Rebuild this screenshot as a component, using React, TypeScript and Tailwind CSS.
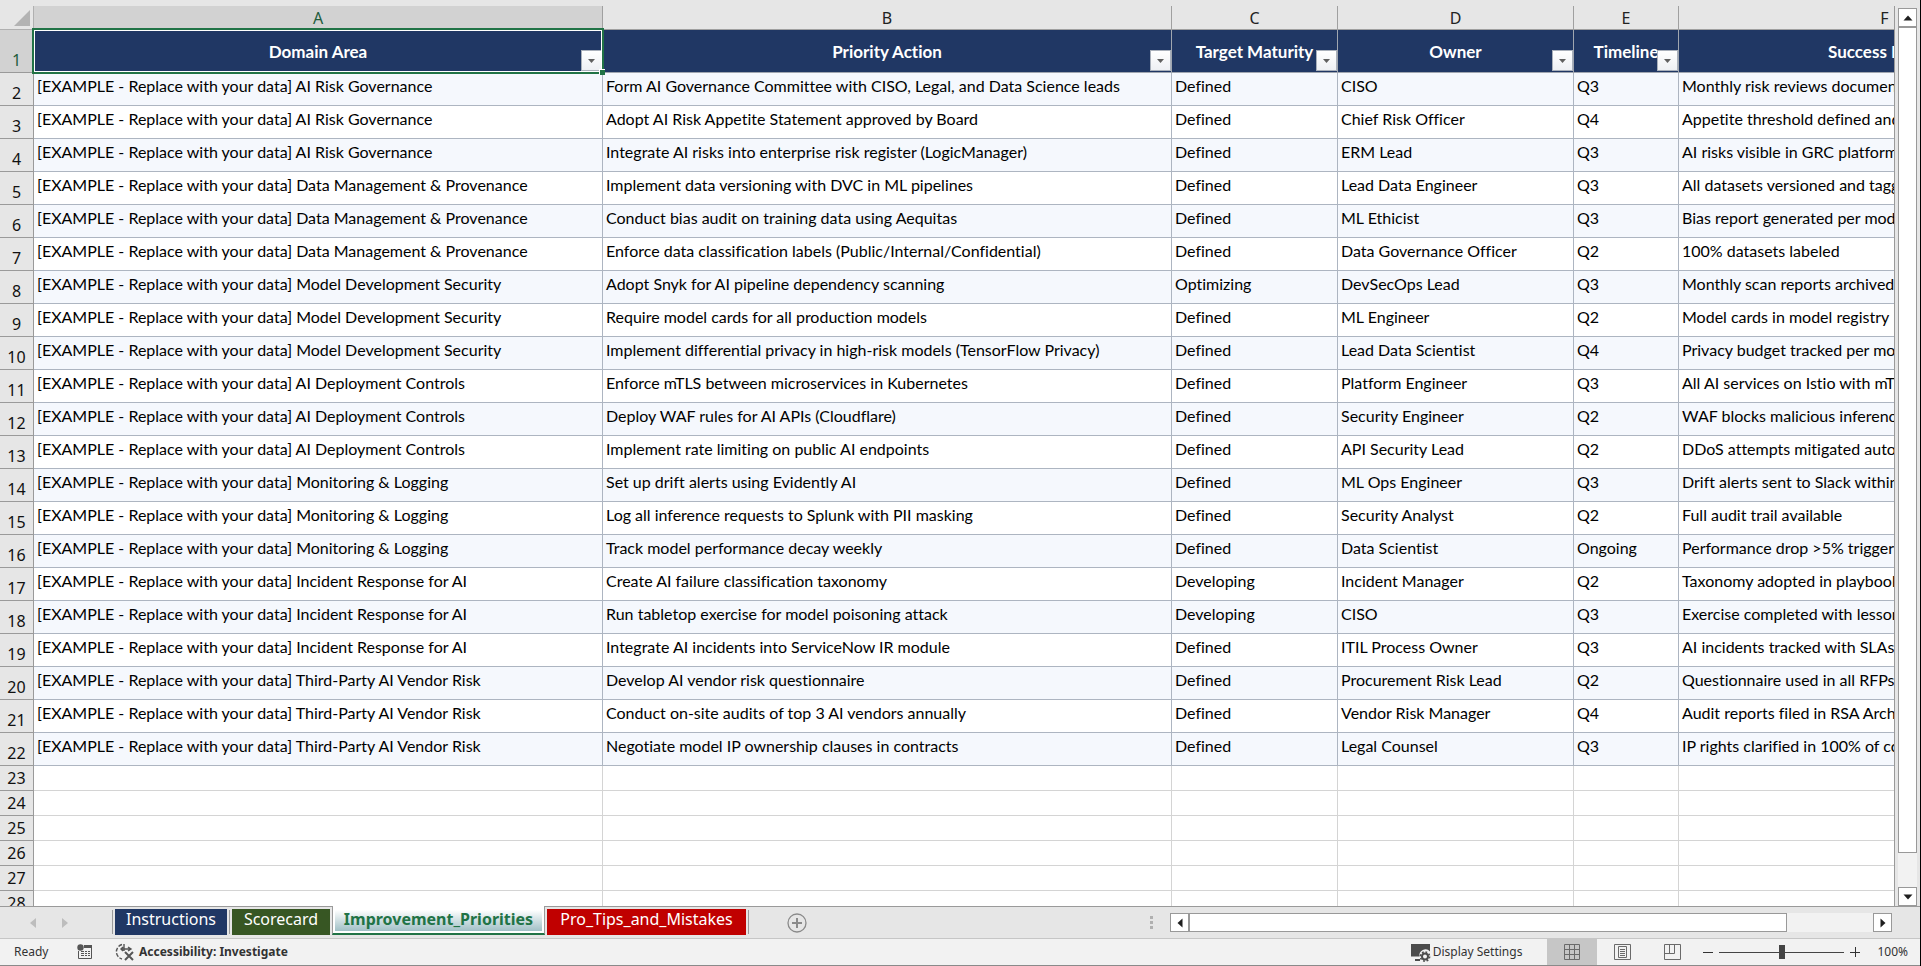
import type { ReactNode } from "react";

const columns = [
  { letter: "A", title: "Domain Area", active: true },
  { letter: "B", title: "Priority Action" },
  { letter: "C", title: "Target Maturity" },
  { letter: "D", title: "Owner" },
  { letter: "E", title: "Timeline" },
  { letter: "F", title: "Success Metric" },
];

const groups = [
  "AI Risk Governance",
  "Data Management & Provenance",
  "Model Development Security",
  "AI Deployment Controls",
  "Monitoring & Logging",
  "Incident Response for AI",
  "Third-Party AI Vendor Risk",
];

// Three actions per domain area, in order.
const actions = [
  ["Form AI Governance Committee with CISO, Legal, and Data Science leads", "Defined", "CISO", "Q3", "Monthly risk reviews documented"],
  ["Adopt AI Risk Appetite Statement approved by Board", "Defined", "Chief Risk Officer", "Q4", "Appetite threshold defined and signed"],
  ["Integrate AI risks into enterprise risk register (LogicManager)", "Defined", "ERM Lead", "Q3", "AI risks visible in GRC platform"],
  ["Implement data versioning with DVC in ML pipelines", "Defined", "Lead Data Engineer", "Q3", "All datasets versioned and tagged"],
  ["Conduct bias audit on training data using Aequitas", "Defined", "ML Ethicist", "Q3", "Bias report generated per model"],
  ["Enforce data classification labels (Public/Internal/Confidential)", "Defined", "Data Governance Officer", "Q2", "100% datasets labeled"],
  ["Adopt Snyk for AI pipeline dependency scanning", "Optimizing", "DevSecOps Lead", "Q3", "Monthly scan reports archived"],
  ["Require model cards for all production models", "Defined", "ML Engineer", "Q2", "Model cards in model registry"],
  ["Implement differential privacy in high-risk models (TensorFlow Privacy)", "Defined", "Lead Data Scientist", "Q4", "Privacy budget tracked per model"],
  ["Enforce mTLS between microservices in Kubernetes", "Defined", "Platform Engineer", "Q3", "All AI services on Istio with mTLS"],
  ["Deploy WAF rules for AI APIs (Cloudflare)", "Defined", "Security Engineer", "Q2", "WAF blocks malicious inference"],
  ["Implement rate limiting on public AI endpoints", "Defined", "API Security Lead", "Q2", "DDoS attempts mitigated automatically"],
  ["Set up drift alerts using Evidently AI", "Defined", "ML Ops Engineer", "Q3", "Drift alerts sent to Slack within 1 hour"],
  ["Log all inference requests to Splunk with PII masking", "Defined", "Security Analyst", "Q2", "Full audit trail available"],
  ["Track model performance decay weekly", "Defined", "Data Scientist", "Ongoing", "Performance drop >5% triggers review"],
  ["Create AI failure classification taxonomy", "Developing", "Incident Manager", "Q2", "Taxonomy adopted in playbooks"],
  ["Run tabletop exercise for model poisoning attack", "Developing", "CISO", "Q3", "Exercise completed with lessons"],
  ["Integrate AI incidents into ServiceNow IR module", "Defined", "ITIL Process Owner", "Q3", "AI incidents tracked with SLAs"],
  ["Develop AI vendor risk questionnaire", "Defined", "Procurement Risk Lead", "Q2", "Questionnaire used in all RFPs"],
  ["Conduct on-site audits of top 3 AI vendors annually", "Defined", "Vendor Risk Manager", "Q4", "Audit reports filed in RSA Archer"],
  ["Negotiate model IP ownership clauses in contracts", "Defined", "Legal Counsel", "Q3", "IP rights clarified in 100% of contracts"],
];

const rows = actions.map((action, i) => [
  `[EXAMPLE - Replace with your data] ${groups[Math.floor(i / 3)]}`,
  ...action,
]);

const emptyRows = [23, 24, 25, 26, 27, 28];

function FilterButton({ label }: { label: string }) {
  return (
    <button
      aria-label={`Filter ${label}`}
      className="absolute right-0 bottom-px flex h-[21px] w-[21px] items-center justify-center border border-[#a9b0bb] bg-linear-to-b from-white to-[#eef0f4]"
    >
      <svg width="7" height="4" viewBox="0 0 7 4" fill="#606060">
        <path d="M0 0h7L3.5 4z" />
      </svg>
    </button>
  );
}

function RowHeader({ n, active = false }: { n: number; active?: boolean }) {
  return (
    <th
      scope="row"
      className={`overflow-hidden border-r border-b border-[#9a9a9a] p-0 align-bottom font-['Noto_Sans',sans-serif] text-base leading-6 font-normal ${
        active ? "bg-[#d2d2d2] text-[#1e5c3c]" : "bg-[#e6e6e6] text-[#111]"
      }`}
    >
      {n}
    </th>
  );
}

function Sheet() {
  return (
    <div className="min-w-0 flex-1 overflow-hidden border-r border-[#9a9a9a]">
      <table className="w-[2091px] table-fixed border-separate border-spacing-0 bg-white font-[Lato,sans-serif] text-base text-black [font-variant-ligatures:none]">
        <colgroup>
          <col className="w-[34px]" />
          <col className="w-[569px]" />
          <col className="w-[569px]" />
          <col className="w-[166px]" />
          <col className="w-[236px]" />
          <col className="w-[105px]" />
          <col className="w-[412px]" />
        </colgroup>
        <thead>
          <tr className="h-6 font-['Noto_Sans',sans-serif]">
            <td className="border-r border-b border-[#b0b0b0] bg-[#e6e6e6] p-0">
              <svg className="mr-[3px] ml-auto" width="16" height="16" viewBox="0 0 16 16" fill="#b3b3b3">
                <path d="M16 0v16H0z" />
              </svg>
            </td>
            {columns.map((col) => (
              <th
                key={col.letter}
                className={`border-r border-b border-[#a0a0a0] p-0 leading-5 font-normal ${
                  col.active ? "bg-[#d2d2d2] text-[#1e5c3c]" : "bg-[#e6e6e6] text-[#222]"
                }`}
              >
                {col.letter}
              </th>
            ))}
          </tr>
          <tr className="h-[43px]">
            <RowHeader n={1} active />
            {columns.map((col) => (
              <th
                key={col.letter}
                scope="col"
                className="relative border-r border-b border-[#a0a6b0] bg-[#203764] px-0 pt-0.5 pb-0 text-[17px] leading-6 text-white"
              >
                {col.title}
                {col.active && (
                  <span className="pointer-events-none absolute -inset-0.5 z-10 border-2 border-[#217346]">
                    <span className="absolute inset-0 border border-white" />
                    <span className="absolute -right-[3px] -bottom-[3px] h-[6px] w-[6px] border-t border-l border-white bg-[#217346]" />
                  </span>
                )}
                <FilterButton label={col.title} />
              </th>
            ))}
          </tr>
        </thead>
        <tbody>
          {rows.map((row, i) => (
            <tr key={i} className="h-[33px] odd:bg-[#f5f8fd]">
              <RowHeader n={i + 2} />
              {row.map((cell, j) => (
                <td
                  key={j}
                  className="overflow-hidden border-r border-b border-[#adb5c1] px-[3px] pt-0 pb-1.5 align-middle leading-6 whitespace-nowrap"
                >
                  {cell}
                </td>
              ))}
            </tr>
          ))}
          {emptyRows.map((n) => (
            <tr key={n} className="h-[25px]">
              <RowHeader n={n} />
              {columns.map((col) => (
                <td key={col.letter} className="border-r border-b border-[#d4d4d4] p-0" />
              ))}
            </tr>
          ))}
        </tbody>
      </table>
    </div>
  );
}

type ArrowProps = { label: string; path: string };

function ScrollButton({ label, path }: ArrowProps) {
  return (
    <button
      aria-label={label}
      className="flex h-[19px] w-[19px] shrink-0 items-center justify-center border border-[#999] bg-white"
    >
      <svg width="10" height="10" viewBox="0 0 10 10" fill="#1f1f1f">
        <path d={path} />
      </svg>
    </button>
  );
}

function VerticalScroll() {
  return (
    <div className="mx-[3px] mt-0.5 flex w-[19px] shrink-0 flex-col bg-[#f2f2f2]">
      <ScrollButton label="Scroll up" path="M5 2.5l4.5 5h-9z" />
      <div className="mb-[34px] flex-1 border border-[#999] bg-white" />
      <ScrollButton label="Scroll down" path="M5 7.5L.5 2.5h9z" />
    </div>
  );
}

function Tab({ className, children }: { className: string; children: ReactNode }) {
  return (
    <button className={`flex h-[26px] items-center justify-center pb-1.5 text-base leading-5 text-white ${className}`}>
      {children}
    </button>
  );
}

function TabBar() {
  return (
    <div className="flex h-8 shrink-0 items-start border-t border-[#9a9a9a] bg-[#e6e6e6] font-['Noto_Sans',sans-serif]">
      <div className="flex h-8 w-28 shrink-0 items-center gap-[26px] pl-[30px]">
        <button aria-label="Previous sheet">
          <svg width="6" height="10" viewBox="0 0 6 10" fill="#bdbdbd">
            <path d="M6 0v10L0 5z" />
          </svg>
        </button>
        <button aria-label="Next sheet">
          <svg width="6" height="10" viewBox="0 0 6 10" fill="#bdbdbd">
            <path d="M0 0v10l6-5z" />
          </svg>
        </button>
      </div>
      <div className="mt-[3px] h-6 w-px bg-[#9a9a9a]" />
      <Tab className="mt-0.5 ml-0.5 w-28 bg-[#203764]">Instructions</Tab>
      <div className="mt-[3px] ml-0.5 h-6 w-px bg-[#9a9a9a]" />
      <Tab className="mt-0.5 ml-0.5 w-[98px] bg-[#375623]">Scorecard</Tab>
      <div className="-mt-px ml-0.5 h-[29px] w-[213px] shrink-0 border-x border-b-2 border-x-[#9a9a9a] border-b-[#217346] bg-white p-0.5 pt-1">
        <button className="flex h-full w-full items-center justify-center bg-linear-to-b from-white to-[#a0c0c6] pb-1 text-base leading-5 font-bold text-[#217346]">
          Improvement_Priorities
        </button>
      </div>
      <Tab className="mt-0.5 ml-0.5 w-[199px] bg-[#c00000]">Pro_Tips_and_Mistakes</Tab>
      <div className="mt-[3px] ml-0.5 h-6 w-px bg-[#9a9a9a]" />
      <button aria-label="New sheet" className="mt-1.5 ml-[38px]">
        <svg width="20" height="20" viewBox="0 0 20 20" fill="none" stroke="#8a8a8a">
          <circle cx="10" cy="10" r="9" strokeWidth="1.3" />
          <path d="M10 5v10M5 10h10" strokeWidth="2" />
        </svg>
      </button>
      <div className="mt-[9px] mr-[17px] ml-auto flex flex-col gap-0.5">
        <span className="h-[3px] w-[3px] bg-[#b0b0b0]" />
        <span className="h-[3px] w-[3px] bg-[#b0b0b0]" />
        <span className="h-[3px] w-[3px] bg-[#b0b0b0]" />
      </div>
      <div className="mt-1.5 mr-7 flex w-[722px] shrink-0 bg-[#f2f2f2]">
        <ScrollButton label="Scroll left" path="M2.5 5l5-4.500v9z" />
        <div className="mr-[86px] flex-1 border border-[#999] bg-white" />
        <ScrollButton label="Scroll right" path="M7.5 5l-5-4.500v9z" />
      </div>
    </div>
  );
}

function StatusBar() {
  return (
    <footer className="flex h-7 shrink-0 items-center border-t border-b border-t-[#c6c6c6] border-b-[#8a8a8a] bg-[#f2f2f2] pl-3.5 font-['Noto_Sans',sans-serif] text-xs text-[#333]">
      <span className="w-[63px]">Ready</span>
      <button aria-label="Macro recording">
        <svg width="16" height="16" viewBox="0 0 16 16" fill="none" stroke="#555">
          <path d="M1.5 7v7.5h13V1" />
          <path d="M7 2.500h8" strokeWidth="3" />
          <path d="M4 7.500h3M8 7.500h2M11 7.500h2M4 9.500h3M8 9.500h2M11 9.500h2M4 11.500h3M8 11.500h2M11 11.500h2" />
          <circle cx="3.500" cy="3.500" r="3.200" fill="#555" stroke="none" />
        </svg>
      </button>
      <button className="ml-[22px] flex items-center gap-1 font-bold">
        <svg width="20" height="18" viewBox="0 0 20 18" fill="none" stroke="#555" strokeWidth="1.4">
          <path d="M7 1.500A7.500 7.500 0 0 0 7 16" strokeDasharray="4 1.500" />
          <path d="M6 6h10M8 4L6 6l2 2M13 4l3 2-3 2M9 1v7" />
          <path d="M10 9l8 8M18 9l-8 8" strokeWidth="2" />
        </svg>
        Accessibility: Investigate
      </button>
      <button className="ml-auto flex items-center gap-0.5">
        <svg width="20" height="19" viewBox="0 0 20 19" fill="none" stroke="#4c4c4c">
          <path d="M0 1h19v7.500A6 6 0 0 0 8.500 13.500H0z" fill="#4c4c4c" stroke="none" />
          <circle cx="14" cy="13.500" r="3" strokeWidth="2" />
          <circle cx="14" cy="13.500" r="4.600" strokeWidth="1.6" strokeDasharray="1.8 1.8" />
          <path d="M4 17h5" strokeWidth="2" />
        </svg>
        Display Settings
      </button>
      <div className="ml-[25px] flex h-full">
        <button aria-label="Normal view" className="flex w-[50px] items-center justify-center bg-[#c6c6c6]">
          <svg width="16" height="16" viewBox="0 0 16 16" fill="none" stroke="#6a6a6a">
            <path d="M.5.5h15v15H.5zM5.500 0v16M10.500 0v16M0 5.500h16M0 10.500h16" />
          </svg>
        </button>
        <button aria-label="Page layout view" className="flex w-[50px] items-center justify-center">
          <svg width="17" height="16" viewBox="0 0 17 16" fill="none" stroke="#6a6a6a">
            <path d="M.5.5h16v15H.5zM4.500 2.500h8v11h-8zM6 5.500h5M6 7.500h5M6 9.500h5M6 11.500h5" />
          </svg>
        </button>
        <button aria-label="Page break preview" className="flex w-[50px] items-center justify-center">
          <svg width="17" height="16" viewBox="0 0 17 16" fill="none" stroke="#6a6a6a">
            <path d="M.5.5h16v15H.5zM.5 9.500h10V.5M5.500.5v9" />
          </svg>
        </button>
      </div>
      <button aria-label="Zoom out" className="ml-1.5">
        <svg width="10" height="10" viewBox="0 0 10 10" stroke="#333">
          <path d="M0 5.500h10" />
        </svg>
      </button>
      <input
        type="range"
        aria-label="Zoom"
        defaultValue={50}
        className="mx-1.5 h-4 w-[125px] appearance-none bg-[linear-gradient(#444,#444)] bg-[length:100%_1px] bg-center bg-no-repeat [&::-webkit-slider-thumb]:h-3.5 [&::-webkit-slider-thumb]:w-[6px] [&::-webkit-slider-thumb]:appearance-none [&::-webkit-slider-thumb]:bg-[#444]"
      />
      <button aria-label="Zoom in">
        <svg width="10" height="10" viewBox="0 0 10 10" stroke="#333">
          <path d="M0 5.500h10M5.500 0v10" />
        </svg>
      </button>
      <span className="mr-3 ml-[17px]">100%</span>
    </footer>
  );
}

export default function App() {
  return (
    <div className="flex h-screen flex-col overflow-hidden border-r border-black bg-[#e6e6e6]">
      <div className="flex min-h-0 flex-1 pt-1.5">
        <Sheet />
        <VerticalScroll />
      </div>
      <TabBar />
      <StatusBar />
    </div>
  );
}
